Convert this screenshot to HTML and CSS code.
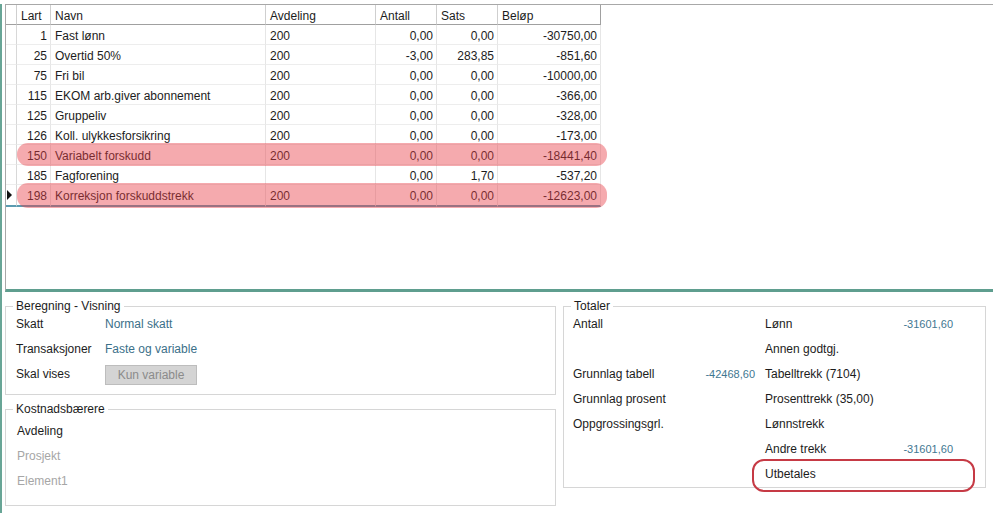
FILE: index.html
```html
<!DOCTYPE html>
<html lang="no">
<head>
    <meta charset="UTF-8">
    <meta name="viewport" content="width=device-width, initial-scale=1.0">
    <title>Lønnsberegning</title>
    <link rel="stylesheet" href="styles.css">
</head>
<body>
    <div class="window">
        <div class="grid-panel">
            <div class="grid">
                <div class="row head">
                    <div class="sel"></div>
                    <div>Lart</div>
                    <div>Navn</div>
                    <div>Avdeling</div>
                    <div>Antall</div>
                    <div>Sats</div>
                    <div>Beløp</div>
                </div>
                <div class="row">
                    <div class="sel"></div>
                    <div class="num">1</div>
                    <div>Fast lønn</div>
                    <div>200</div>
                    <div class="num">0,00</div>
                    <div class="num">0,00</div>
                    <div class="num">-30750,00</div>
                </div>
                <div class="row">
                    <div class="sel"></div>
                    <div class="num">25</div>
                    <div>Overtid 50%</div>
                    <div>200</div>
                    <div class="num">-3,00</div>
                    <div class="num">283,85</div>
                    <div class="num">-851,60</div>
                </div>
                <div class="row">
                    <div class="sel"></div>
                    <div class="num">75</div>
                    <div>Fri bil</div>
                    <div>200</div>
                    <div class="num">0,00</div>
                    <div class="num">0,00</div>
                    <div class="num">-10000,00</div>
                </div>
                <div class="row">
                    <div class="sel"></div>
                    <div class="num">115</div>
                    <div>EKOM arb.giver abonnement</div>
                    <div>200</div>
                    <div class="num">0,00</div>
                    <div class="num">0,00</div>
                    <div class="num">-366,00</div>
                </div>
                <div class="row">
                    <div class="sel"></div>
                    <div class="num">125</div>
                    <div>Gruppeliv</div>
                    <div>200</div>
                    <div class="num">0,00</div>
                    <div class="num">0,00</div>
                    <div class="num">-328,00</div>
                </div>
                <div class="row">
                    <div class="sel"></div>
                    <div class="num">126</div>
                    <div>Koll. ulykkesforsikring</div>
                    <div>200</div>
                    <div class="num">0,00</div>
                    <div class="num">0,00</div>
                    <div class="num">-173,00</div>
                </div>
                <div class="row marked">
                    <div class="sel"></div>
                    <div class="num">150</div>
                    <div>Variabelt forskudd</div>
                    <div>200</div>
                    <div class="num">0,00</div>
                    <div class="num">0,00</div>
                    <div class="num">-18441,40</div>
                </div>
                <div class="row">
                    <div class="sel"></div>
                    <div class="num">185</div>
                    <div>Fagforening</div>
                    <div></div>
                    <div class="num">0,00</div>
                    <div class="num">1,70</div>
                    <div class="num">-537,20</div>
                </div>
                <div class="row marked current">
                    <div class="sel"><span class="arrow"></span></div>
                    <div class="num">198</div>
                    <div>Korreksjon forskuddstrekk</div>
                    <div>200</div>
                    <div class="num">0,00</div>
                    <div class="num">0,00</div>
                    <div class="num">-12623,00</div>
                </div>
            </div>
        </div>

        <div class="bottom">
            <div class="left-col">
                <fieldset class="group calc">
                    <legend>Beregning - Visning</legend>
                    <div class="field">
                        <span>Skatt</span>
                        <span class="value">Normal skatt</span>
                    </div>
                    <div class="field">
                        <span>Transaksjoner</span>
                        <span class="value">Faste og variable</span>
                    </div>
                    <div class="field">
                        <span>Skal vises</span>
                        <span><span class="btn">Kun variable</span></span>
                    </div>
                </fieldset>

                <fieldset class="group cost">
                    <legend>Kostnadsbærere</legend>
                    <div class="field">Avdeling</div>
                    <div class="field muted">Prosjekt</div>
                    <div class="field muted">Element1</div>
                </fieldset>
            </div>

            <fieldset class="group totals">
                <legend>Totaler</legend>
                <div class="tot-wrap">
                    <div class="tot tot-left">
                        <span>Antall</span><span class="amount"></span>
                        <span></span><span class="amount"></span>
                        <span>Grunnlag tabell</span><span class="amount">-42468,60</span>
                        <span>Grunnlag prosent</span><span class="amount"></span>
                        <span>Oppgrossingsgrl.</span><span class="amount"></span>
                    </div>
                    <div class="tot tot-right">
                        <span>Lønn</span><span class="amount">-31601,60</span>
                        <span>Annen godtgj.</span><span class="amount"></span>
                        <span>Tabelltrekk (7104)</span><span class="amount"></span>
                        <span>Prosenttrekk (35,00)</span><span class="amount"></span>
                        <span>Lønnstrekk</span><span class="amount"></span>
                        <span>Andre trekk</span><span class="amount">-31601,60</span>
                        <span class="payout">Utbetales</span>
                    </div>
                </div>
            </fieldset>
        </div>
    </div>
</body>
</html>
```

FILE: styles.css
```css
* {
    margin: 0;
    padding: 0;
    box-sizing: border-box;
}

body {
    font-family: 'Liberation Sans', Arial, sans-serif;
    font-size: 12px;
    color: #1c1c1c;
    background: #fff;
}

.window {
    min-height: 100vh;
    border-left: 2px solid #68a596;
    padding-left: 3px;
}

/* grid */

.grid-panel {
    margin-top: 4px;
    height: 288px;
    border-top: 1px solid #a8a8a8;
    border-left: 1px solid #a8a8a8;
    border-bottom: 3px solid #5f9e8f;
}

.grid {
    width: 595px;
}

.row {
    display: grid;
    grid-template-columns: 11px 34px 215px 110px 61px 61px 103px;
    height: 20px;
}

.row > div {
    border-right: 1px solid #e6e6e6;
    border-bottom: 1px solid #ededed;
    padding: 2px 4px 0;
    line-height: 19px;
    white-space: nowrap;
    overflow: hidden;
}

.row .num {
    text-align: right;
    padding-right: 3px;
}

.row.head > div {
    border-right-color: #cfcfcf;
    border-bottom-color: #a0a0a0;
}

.row.head > div:last-child {
    border-right-color: #a0a0a0;
}

.row > .sel {
    padding: 0;
    border-right-color: #d8d8d8;
}

.row.current {
    height: 22px;
}

.row.current > div {
    border-bottom: 2px solid #5b9bb0;
}

.arrow {
    display: block;
    margin: 5px 0 0 1px;
    width: 0;
    height: 0;
    border-left: 5px solid #111;
    border-top: 5px solid transparent;
    border-bottom: 5px solid transparent;
}

/* marker annotation over rows */
.row.marked {
    position: relative;
}

.row.marked::after {
    content: '';
    position: absolute;
    left: 11px;
    right: -6px;
    top: -2px;
    bottom: -1px;
    border-radius: 11px;
    background: rgba(233, 62, 70, 0.44);
}

/* bottom groups */

.bottom {
    display: flex;
    align-items: flex-start;
    gap: 7px;
    margin-top: 8px;
}

.left-col {
    width: 551px;
    display: flex;
    flex-direction: column;
    gap: 8px;
}

.group {
    border: 1px solid #d6d6d6;
    min-width: 0;
    padding: 0 8px 0 10px;
}

.group legend {
    line-height: 12px;
    padding: 0 3px;
    margin-left: -3px;
}

.field {
    display: grid;
    grid-template-columns: 89px 1fr;
    line-height: 25px;
    height: 25px;
}

.value {
    color: #3b7089;
}

.btn {
    display: inline-block;
    width: 92px;
    height: 20px;
    line-height: 18px;
    border: 1px solid #bdbdbd;
    background: #d4d4d4;
    color: #8b8b8b;
    text-align: center;
    vertical-align: middle;
}

.calc {
    padding-bottom: 7px;
}

.cost {
    padding: 4px 8px 11px 11px;
}

.cost legend {
    margin-left: -4px;
}

.muted {
    color: #a6a6a6;
}

.totals {
    width: 423px;
    padding-left: 9px;
}

.totals legend {
    margin-left: -2px;
}

.tot-wrap {
    display: flex;
    gap: 10px;
}

.tot {
    display: grid;
    grid-auto-rows: 25px;
    line-height: 25px;
}

.tot-left {
    grid-template-columns: 127px 55px;
}

.tot-right {
    grid-template-columns: 125px 63px;
}

.amount {
    text-align: right;
    font-size: 11px;
    color: #3f7791;
}

.payout {
    grid-column: 1 / 3;
    position: relative;
}

/* marker annotation round the payout line */
.payout::after {
    content: '';
    position: absolute;
    left: -13px;
    right: -22px;
    top: -3px;
    bottom: -5px;
    border: 2px solid #c63a45;
    border-radius: 12px;
}
```
